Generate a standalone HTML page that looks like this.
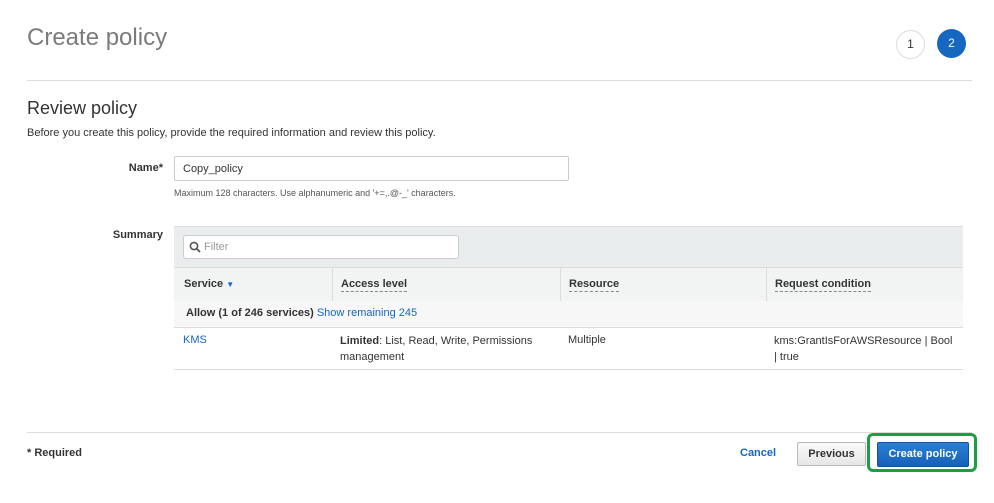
<!DOCTYPE html>
<html><head><style>
body{margin:0;width:994px;height:503px;background:#fff;font-family:"Liberation Sans",sans-serif;color:#333;position:relative;overflow:hidden}
.a{position:absolute;white-space:nowrap}
.circ{position:absolute;width:27px;height:27px;border-radius:50%;text-align:center;line-height:27px;font-size:12px}
.dot{border-bottom:1px dashed #888;padding-bottom:1px}
</style></head><body>
<div class="a" style="left:27px;top:24px;font-size:24px;color:#7b7b7b">Create policy</div>
<div class="circ" style="left:896px;top:30px;border:1px solid #ddd;color:#333">1</div>
<div class="circ" style="left:937px;top:29px;background:#1567c0;color:#fff;width:29px;height:29px;line-height:29px">2</div>
<div class="a" style="left:27px;top:80px;width:945px;height:1px;background:#ddd"></div>
<div class="a" style="left:27px;top:98px;font-size:18px;color:#333">Review policy</div>
<div class="a" style="left:27px;top:127px;font-size:11px">Before you create this policy, provide the required information and review this policy.</div>
<div class="a" style="left:100px;width:63px;text-align:right;top:162px;font-size:11px;font-weight:bold">Name*</div>
<div class="a" style="left:174px;top:156px;width:393px;height:23px;border:1px solid #ccc;border-radius:2px;font-size:11px;line-height:24px;text-indent:8px">Copy_policy</div>
<div class="a" style="left:174px;top:188px;font-size:9px;color:#555">Maximum 128 characters. Use alphanumeric and '+=,.@-_' characters.</div>
<div class="a" style="left:100px;width:63px;text-align:right;top:229px;font-size:11px;font-weight:bold">Summary</div>
<div class="a" style="left:174px;top:226px;width:789px;height:41px;background:#eaeded;border-top:1px solid #ddd"></div>
<div class="a" style="left:183px;top:235px;width:274px;height:22px;background:#fff;border:1px solid #ccc;border-radius:3px;font-size:11px;line-height:22px;color:#999">
<svg style="position:absolute;left:5px;top:5px" width="12" height="12" viewBox="0 0 12 12"><circle cx="5" cy="5" r="3.6" fill="none" stroke="#555" stroke-width="1.6"/><path d="M7.5 7.5L11 11" stroke="#555" stroke-width="1.8"/></svg>
<span style="position:absolute;left:20px">Filter</span></div>
<div class="a" style="left:174px;top:267px;width:789px;height:33px;background:#f2f3f3;border-top:1px solid #ddd;border-bottom:1px solid #ddd"></div>
<div class="a" style="left:332px;top:267px;width:1px;height:34px;background:#ddd"></div>
<div class="a" style="left:560px;top:267px;width:1px;height:34px;background:#ddd"></div>
<div class="a" style="left:766px;top:267px;width:1px;height:34px;background:#ddd"></div>
<div class="a" style="left:184px;top:278px;font-size:11px;font-weight:bold">Service <span style="color:#1567c0;font-size:8px">&#9660;</span></div>
<div class="a" style="left:341px;top:278px;font-size:11px;font-weight:bold"><span class="dot">Access level</span></div>
<div class="a" style="left:569px;top:278px;font-size:11px;font-weight:bold"><span class="dot">Resource</span></div>
<div class="a" style="left:775px;top:278px;font-size:11px;font-weight:bold"><span class="dot">Request condition</span></div>
<div class="a" style="left:174px;top:301px;width:789px;height:26px;background:#f7f7f7;border-bottom:1px solid #ddd"></div>
<div class="a" style="left:186px;top:307px;font-size:11px"><b>Allow (1 of 246 services)</b> <span style="color:#1567c0">Show remaining 245</span></div>
<div class="a" style="left:174px;top:369px;width:789px;height:1px;background:#ddd"></div>
<div class="a" style="left:183px;top:334px;font-size:11px;color:#1567c0">KMS</div>
<div class="a" style="left:340px;top:333px;font-size:11px;line-height:16px"><b>Limited</b>: List, Read, Write, Permissions<br>management</div>
<div class="a" style="left:568px;top:334px;font-size:11px">Multiple</div>
<div class="a" style="left:774px;top:333px;font-size:11px;line-height:16px">kms:GrantIsForAWSResource | Bool<br>| true</div>
<div class="a" style="left:27px;top:432px;width:945px;height:1px;background:#ddd"></div>
<div class="a" style="left:27px;top:447px;font-size:11px;font-weight:bold">* Required</div>
<div class="a" style="left:740px;top:447px;font-size:11px;font-weight:bold;color:#1567c0">Cancel</div>
<div class="a" style="left:797px;top:442px;width:67px;height:22px;border:1px solid #bbb;border-radius:2px;background:linear-gradient(#fafafa,#e6e6e6);font-size:11px;font-weight:bold;text-align:center;line-height:22px">Previous</div>
<div class="a" style="left:867px;top:433px;width:104px;height:33px;border:3px solid #1aa043;border-radius:6px"></div>
<div class="a" style="left:877px;top:442px;width:90px;height:23px;border:1px solid #15509a;border-radius:2px;background:linear-gradient(#2a7fd6,#1660b8);color:#fff;font-size:11px;font-weight:bold;text-align:center;line-height:23px">Create policy</div>
</body></html>
